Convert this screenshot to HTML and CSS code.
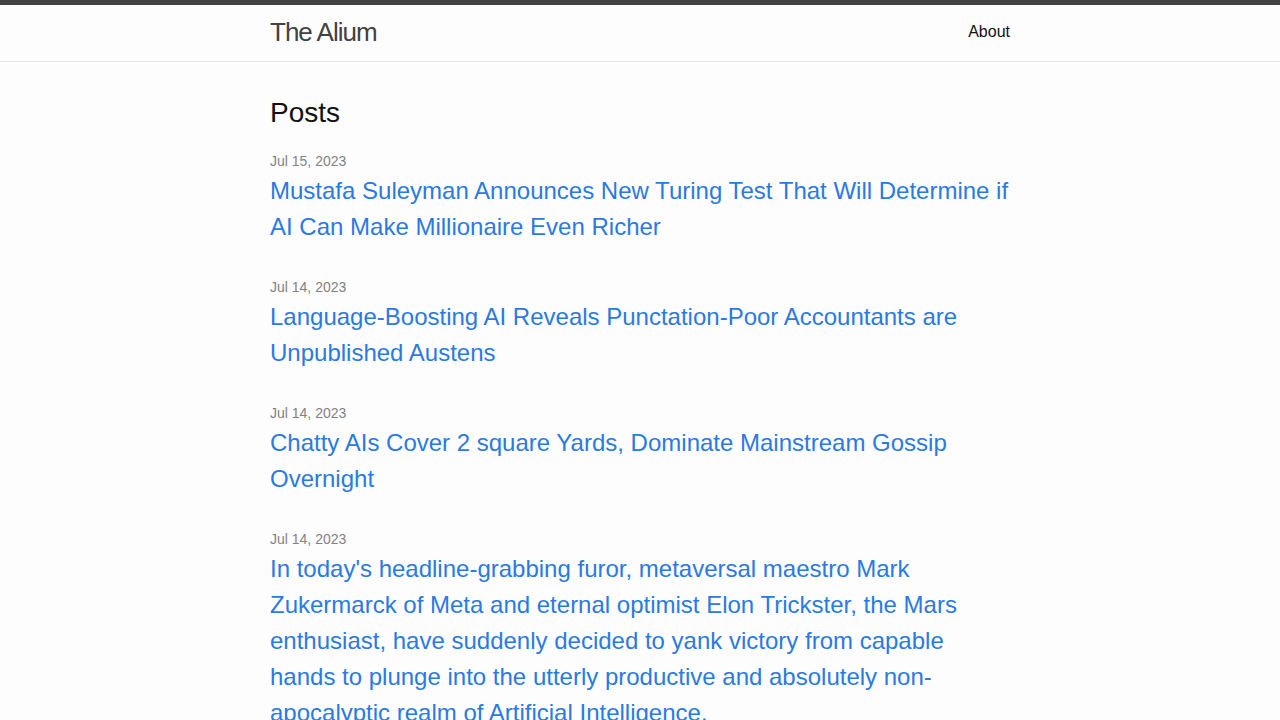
FILE: index.html
```html
<!DOCTYPE html>
<html lang="en">
<head>
<meta charset="utf-8">
<title>The Alium</title>
<link rel="stylesheet" href="styles.css">
</head>
<body>
<header class="site-header">
  <div class="wrapper header-inner">
    <a class="site-title" href="#">The Alium</a>
    <nav class="site-nav"><a class="page-link" href="#">About</a></nav>
  </div>
</header>
<main class="page-content">
  <div class="wrapper">
    <h2 class="post-list-heading">Posts</h2>
    <ul class="post-list">
      <li>
        <span class="post-meta">Jul 15, 2023</span>
        <h3><a class="post-link" href="#">Mustafa Suleyman Announces New Turing Test That Will Determine if AI Can Make Millionaire Even Richer</a></h3>
      </li>
      <li>
        <span class="post-meta">Jul 14, 2023</span>
        <h3><a class="post-link" href="#">Language-Boosting AI Reveals Punctation-Poor Accountants are Unpublished Austens</a></h3>
      </li>
      <li>
        <span class="post-meta">Jul 14, 2023</span>
        <h3><a class="post-link" href="#">Chatty AIs Cover 2 square Yards, Dominate Mainstream Gossip Overnight</a></h3>
      </li>
      <li>
        <span class="post-meta">Jul 14, 2023</span>
        <h3><a class="post-link" href="#">In today's headline-grabbing furor, metaversal maestro Mark Zukermarck of Meta and eternal optimist Elon Trickster, the Mars enthusiast, have suddenly decided to yank victory from capable hands to plunge into the utterly productive and absolutely non-apocalyptic realm of Artificial Intelligence.</a></h3>
      </li>
    </ul>
  </div>
</main>
</body>
</html>
```
FILE: styles.css
```css
html, body {
  margin: 0;
  padding: 0;
}
body {
  font-family: "Liberation Sans", Arial, Helvetica, sans-serif;
  font-size: 16px;
  line-height: 1.5;
  font-weight: 400;
  color: #111111;
  background-color: #fdfdfd;
}
a {
  text-decoration: none;
}
.wrapper {
  max-width: 740px;
  margin: 0 auto;
  padding: 0 30px;
}
.site-header {
  border-top: 5px solid #424242;
  border-bottom: 1px solid #e8e8e8;
  min-height: 56px;
}
.header-inner {
  display: flex;
  justify-content: space-between;
  align-items: flex-start;
}
.site-title {
  font-size: 26px;
  font-weight: 300;
  line-height: 54px;
  letter-spacing: -1px;
  color: #424242;
}
.site-nav {
  line-height: 54px;
}
.page-link {
  color: #111111;
  line-height: 1.5;
}
.page-content {
  padding: 30px 0;
}
.post-list-heading {
  font-size: 28px;
  font-weight: 400;
  line-height: 1.5;
  margin: 0 0 15px;
}
.post-list {
  list-style: none;
  margin: 0;
  padding: 0;
}
.post-list > li {
  margin-bottom: 30px;
}
.post-meta {
  font-size: 14px;
  color: #828282;
}
.post-list h3 {
  margin: 0;
  font-size: 24px;
  font-weight: 400;
  line-height: 1.5;
}
.post-link {
  display: block;
  color: #2a7ae2;
}
```
